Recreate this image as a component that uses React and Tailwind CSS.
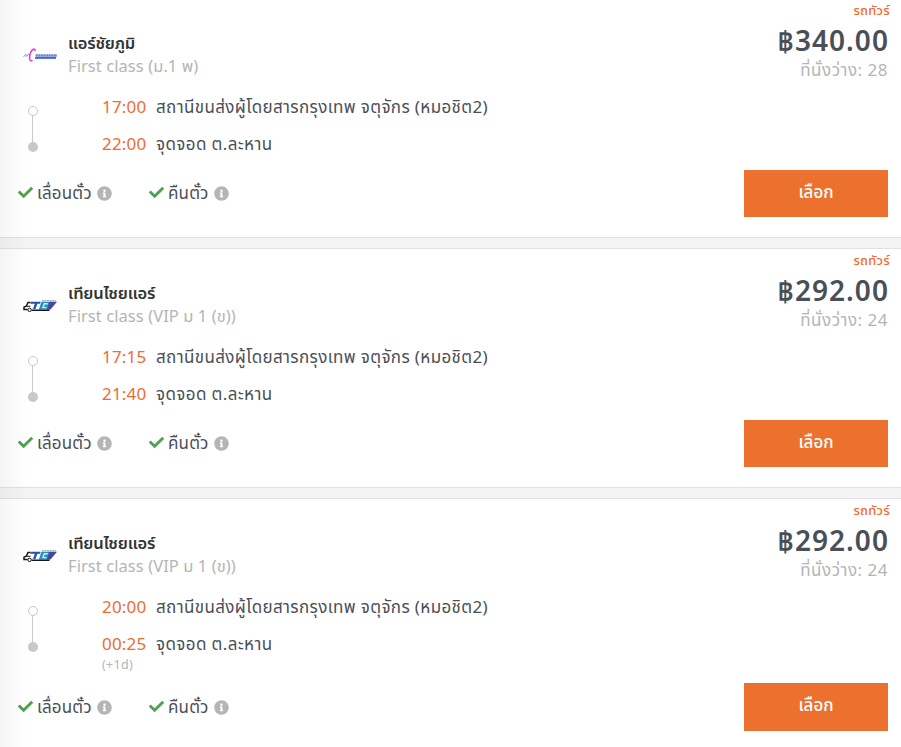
import { FaCheck, FaInfoCircle } from "react-icons/fa";

const trips = [
  { name: "แอร์ชัยภูมิ", cls: "First class (ม.1 พ)", from: "17:00", to: "22:00", price: "฿340.00", seats: 28, logo: "chaiyaphum" },
  { name: "เทียนไชยแอร์", cls: "First class (VIP ม 1 (ข))", from: "17:15", to: "21:40", price: "฿292.00", seats: 24, logo: "tc" },
  { name: "เทียนไชยแอร์", cls: "First class (VIP ม 1 (ข))", from: "20:00", to: "00:25", price: "฿292.00", seats: 24, logo: "tc", nextDay: true },
];

function ChaiyaphumLogo() {
  return (
    <svg viewBox="0 0 34 34" className="h-[34px] w-[34px]">
      <path d="M.5 17.8L3 15.2V17.8M4 17.5L5 15.4H6.5" fill="none" stroke="#8d9ccf" strokeWidth="1" />
      <path d="M12.3 12C11.8 8.5 8.8 10.3 7.4 14C6 18 6 23.3 9.5 21.3" fill="none" stroke="#e33ad2" strokeWidth="1.5" />
      <path d="M12.5 16.6H34" stroke="#8fa4dc" strokeWidth="2.2" />
      <path d="M13 16.4H34" stroke="#7185c4" strokeWidth="2.4" strokeDasharray="1.5 1.1" />
      <path d="M12 18.9H33" stroke="#3e65e2" strokeWidth="1.9" />
    </svg>
  );
}

function TcLogo() {
  return (
    <svg viewBox="0 0 34 34" className="h-[34px] w-[34px]">
      <path d="M19 11.7H33" stroke="#8994ad" strokeWidth="1.1" strokeDasharray="2 .5" />
      <path d="M8 12.8H17.7L17 14.8H14.4L12.4 20H10L11.8 14.8H7.3z" fill="#2551b0" />
      <path d="M18.5 12.8H28L25.5 20.5H15.8z" fill="#2a8fc0" />
      <path d="M24.8 14.7H21.3L20 18.6H23.6" stroke="#c9f3f5" strokeWidth="1.4" fill="none" />
      <path d="M26.5 12.8H34L27.5 20.5H24z" fill="#45479a" />
      <path d="M7.5 13.4H5L3.4 17L1 18.2V20.4H4.6M8.6 21.3H26.5" stroke="#16191e" strokeWidth="1.5" fill="none" />
      <path d="M3.4 17.3H7.5" stroke="#16191e" strokeWidth="1" />
      <circle cx="6.6" cy="20.9" r="1.7" fill="#fff" stroke="#111" />
    </svg>
  );
}

function Benefit({ label, className }) {
  return (
    <div className={"flex items-center " + className}>
      <FaCheck className="mb-px mr-[4px] h-[15px] w-[15px] shrink-0 text-[#4fa34f]" />
      <span className="whitespace-nowrap text-[17px] tracking-[0.15px] text-[#4a4f57]">{label}</span>
      <FaInfoCircle className="ml-auto h-[15px] w-[15px] shrink-0 text-[#b5b5b5]" />
    </div>
  );
}

function Trip({ trip }) {
  return (
    <article className={"flex justify-between border-y border-[#e0e1e5] bg-white " + (trip.nextDay ? "h-[254px]" : "h-[240px]")}>
      <div className="pt-[32px]">
        <div className="flex pl-[23px]">
          <div className="mr-[11px] mt-[8px]">{trip.logo === "tc" ? <TcLogo /> : <ChaiyaphumLogo />}</div>
          <div className="whitespace-nowrap">
            <h2 className="h-[23px] text-[16.5px] font-semibold leading-[23px] tracking-[-0.2px] text-[#333]">{trip.name}</h2>
            <p className="h-[23px] text-[16.5px] leading-[23px] tracking-[0.07px] text-[#b5b5b5]">{trip.cls}</p>
          </div>
        </div>
        <div className={"mt-[11px] flex pl-[28px] " + (trip.nextDay ? "h-[90px]" : "h-[76px]")}>
          <div className="mt-[18px] flex w-[10px] flex-col items-center">
            <span className="h-[10px] w-[10px] rounded-full border border-[#c8c8c8] bg-white" />
            <span className="mr-px h-[26px] w-px bg-[#c8c8c8]" />
            <span className="h-[10px] w-[10px] rounded-full bg-[#c8c8c8]" />
          </div>
          <div className="ml-[64px] whitespace-nowrap text-[17px] leading-[37px]">
            <div className="flex h-[37px]">
              <time className="w-[54px] tracking-[0.2px] text-[#ed6c30]">{trip.from}</time>
              <span className="tracking-[0.37px] text-[#4a4f57]">สถานีขนส่งผู้โดยสารกรุงเทพ จตุจักร (หมอชิต2)</span>
            </div>
            <div className="flex h-[37px]">
              <time className="w-[54px] tracking-[0.2px] text-[#ed6c30]">{trip.to}</time>
              <span className="tracking-[0.4px] text-[#4a4f57]">จุดจอด ต.ละหาน</span>
            </div>
            {trip.nextDay && <p className="-mt-[6px] text-[12.5px] leading-[18px] tracking-[0.3px] text-[#b5b5b5]">(+1d)</p>}
          </div>
        </div>
        <div className="mt-[17px] flex h-[24px] pl-[18px]">
          <Benefit label="เลื่อนตั๋ว" className="w-[94px]" />
          <Benefit label="คืนตั๋ว" className="ml-[37px] w-[80px]" />
        </div>
      </div>
      <div className="flex w-[180px] flex-col items-end whitespace-nowrap pr-[13px]">
        <p className="-mr-[2px] mt-[2px] h-[18px] text-[13px] font-medium leading-[18px] tracking-[0.25px] text-[#ed6c30]">รถทัวร์</p>
        <p className="-mr-px mt-[3px] h-[36px] text-[28px] font-semibold leading-[36px] tracking-[1.05px] text-[#4a4f57]">{trip.price}</p>
        <p className="mt-[2px] h-[20px] text-[17px] leading-[20px] tracking-[0.5px] text-[#b5b5b5]">ที่นั่งว่าง: {trip.seats}</p>
        <button className={"mb-[20px] mt-auto w-[144px] bg-[#ed712e] pb-[4px] text-[17px] font-medium text-white " + (trip.nextDay ? "h-[48px]" : "h-[47px]")}>เลือก</button>
      </div>
    </article>
  );
}

export default function App() {
  return (
    <main className="relative h-[747px] overflow-hidden bg-[#f4f4f4] font-['Noto_Sans','Noto_Sans_Thai',sans-serif]">
      <div className="-mt-[2px] flex flex-col gap-[10px]">
        {trips.map((trip, i) => <Trip key={i} trip={trip} />)}
      </div>
      <div className="pointer-events-none absolute inset-y-0 left-0 w-[28px] bg-gradient-to-r from-black/[0.04] to-transparent" />
    </main>
  );
}
